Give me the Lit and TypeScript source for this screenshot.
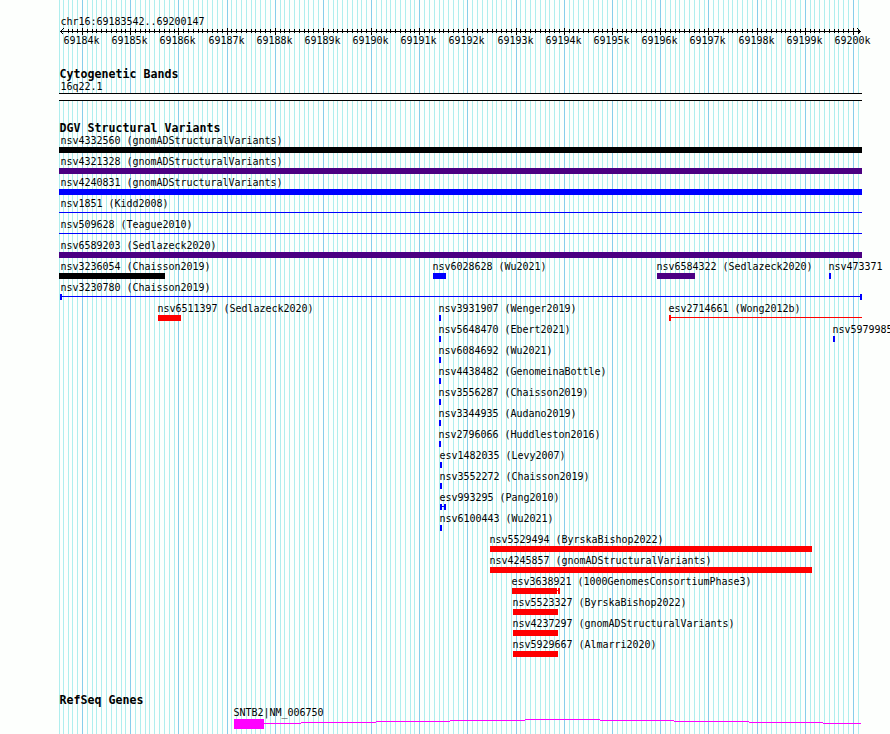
import { LitElement, css, html, svg } from 'lit';
import { customElement, property } from 'lit/decorators.js';
import { styleMap } from 'lit/directives/style-map.js';

type Glyph = 'box' | 'line' | 'capLeft' | 'capBoth' | 'boxCap';

interface Feature {
  label: string;
  // pixel columns on the panel, end is exclusive
  start: number;
  end: number;
  color: string;
  glyph: Glyph;
  labelAt?: number;
}

const PANEL_START = 59;
const PANEL_END = 862;
const WIDTH = 890;
const HEIGHT = 734;

const BLACK = '#000000';
const INDIGO = '#4b0082';
const BLUE = '#0000ff';
const RED = '#ff0000';
const MAGENTA = '#ff00ff';

const PX_PER_KB = 48.18;
const FIRST_KB = 69184;
const LAST_KB = 69200;

const kbToX = (kb: number) => Math.round(82.02 + (kb - FIRST_KB) * PX_PER_KB);

const f = (
  label: string,
  start: number,
  end: number,
  color: string,
  glyph: Glyph = 'box',
  labelAt?: number,
): Feature => ({ label, start, end, color, glyph, labelAt });

const full = (label: string, color: string, glyph: Glyph = 'box') =>
  f(label, PANEL_START, PANEL_END, color, glyph, 60.5);

const ROWS: Feature[][] = [
  [full('nsv4332560 (gnomADStructuralVariants)', BLACK)],
  [full('nsv4321328 (gnomADStructuralVariants)', INDIGO)],
  [full('nsv4240831 (gnomADStructuralVariants)', BLUE)],
  [full('nsv1851 (Kidd2008)', BLUE, 'line')],
  [full('nsv509628 (Teague2010)', BLUE, 'line')],
  [full('nsv6589203 (Sedlazeck2020)', INDIGO)],
  [
    f('nsv3236054 (Chaisson2019)', 59, 165, BLACK, 'box', 60.5),
    f('nsv6028628 (Wu2021)', 433, 446, BLUE),
    f('nsv6584322 (Sedlazeck2020)', 657, 695, INDIGO),
    f('nsv473371', 829, 831, BLUE),
  ],
  [f('nsv3230780 (Chaisson2019)', 60, 862, BLUE, 'capBoth', 60.5)],
  [
    f('nsv6511397 (Sedlazeck2020)', 158, 181, RED),
    f('nsv3931907 (Wenger2019)', 439, 441, BLUE),
    f('esv2714661 (Wong2012b)', 669, 862, RED, 'capLeft'),
  ],
  [
    f('nsv5648470 (Ebert2021)', 439, 441, BLUE),
    f('nsv5979985', 833, 835, BLUE),
  ],
  [f('nsv6084692 (Wu2021)', 439, 441, BLUE)],
  [f('nsv4438482 (GenomeinaBottle)', 439, 441, BLUE)],
  [f('nsv3556287 (Chaisson2019)', 439, 441, BLUE)],
  [f('nsv3344935 (Audano2019)', 439, 441, BLUE)],
  [f('nsv2796066 (Huddleston2016)', 439, 441, BLUE)],
  [f('esv1482035 (Levy2007)', 440, 442, BLUE)],
  [f('nsv3552272 (Chaisson2019)', 440, 442, BLUE)],
  [f('esv993295 (Pang2010)', 440, 446, BLUE, 'capBoth')],
  [f('nsv6100443 (Wu2021)', 440, 442, BLUE)],
  [f('nsv5529494 (ByrskaBishop2022)', 490, 812, RED)],
  [f('nsv4245857 (gnomADStructuralVariants)', 490, 812, RED)],
  [f('esv3638921 (1000GenomesConsortiumPhase3)', 512, 560, RED, 'boxCap')],
  [f('nsv5523327 (ByrskaBishop2022)', 513, 558, RED)],
  [f('nsv4237297 (gnomADStructuralVariants)', 513, 558, RED)],
  [f('nsv5929667 (Almarri2020)', 513, 558, RED)],
];

@customElement('gb-gridlines')
export class GbGridlines extends LitElement {
  static styles = css`
    :host,
    svg {
      display: block;
    }
    .minor {
      fill: #afeeee;
    }
    .major {
      fill: #87ceeb;
    }
  `;

  render() {
    const minor: number[] = [PANEL_START];
    const major: number[] = [];
    for (let i = -4; i <= (LAST_KB - FIRST_KB) * 10 + 1; i++) {
      const x = kbToX(FIRST_KB + i / 10);
      if (i % 10 === 0) major.push(x);
      else minor.push(x);
    }
    const line = (x: number, cls: string) =>
      svg`<rect class=${cls} x=${x} y="0" width="1" height=${HEIGHT}></rect>`;
    return html`<svg width=${WIDTH} height=${HEIGHT} shape-rendering="crispEdges">
      ${minor.map((x) => line(x, 'minor'))}
      ${major.map((x) => line(x, 'major'))}
    </svg>`;
  }
}

@customElement('gb-ruler')
export class GbRuler extends LitElement {
  static styles = css`
    :host,
    svg {
      display: block;
    }
    .arrow {
      fill: none;
      stroke: #000;
    }
    .labels {
      display: grid;
      height: 12px;
      line-height: 11px;
    }
    .label {
      grid-area: 1 / 1;
      white-space: pre;
    }
  `;

  render() {
    const ticks = [];
    for (let i = -3; i <= (LAST_KB - FIRST_KB) * 10 + 1; i++) {
      const x = kbToX(FIRST_KB + i / 10);
      const isMajor = i % 10 === 0;
      ticks.push(
        svg`<rect x=${x} y=${isMajor ? 0 : 1} width="1" height=${isMajor ? 7 : 4}></rect>`,
      );
    }
    const labels = [];
    for (let kb = FIRST_KB; kb <= LAST_KB; kb++) labels.push(kb);
    return html`
      <svg width=${WIDTH} height="7" shape-rendering="crispEdges">
        <rect x="60" y="3" width="801" height="1"></rect>
        ${ticks}
        <path class="arrow" d="M63.5 .5L60.5 3.5L63.5 6.5M857.5 .5L860.5 3.5L857.5 6.5"></path>
      </svg>
      <div class="labels">
        ${labels.map(
          (kb) => html`<span
            class="label"
            style=${styleMap({ marginLeft: `${kbToX(kb) - 18.5}px` })}
            >${kb}k</span
          >`,
        )}
      </div>
    `;
  }
}

@customElement('gb-feature')
export class GbFeature extends LitElement {
  static styles = css`
    :host {
      display: block;
    }
    .label {
      height: 13px;
      line-height: 13px;
      white-space: pre;
    }
    svg {
      display: block;
    }
  `;

  @property({ attribute: false })
  feature!: Feature;

  private _renderGlyph({ start, end, glyph }: Feature) {
    const w = end - start;
    switch (glyph) {
      case 'line':
        return svg`<rect y="2" width=${w} height="1"></rect>`;
      case 'capLeft':
        return svg`<rect width="2" height="6"></rect>
          <rect y="2" width=${w} height="1"></rect>`;
      case 'capBoth':
        return svg`<rect width="2" height="6"></rect>
          <rect y="2" width=${w} height="1"></rect>
          <rect x=${w - 2} width="2" height="6"></rect>`;
      case 'boxCap':
        return svg`<rect width=${w - 3} height="6"></rect>
          <rect y="2" width=${w} height="1"></rect>
          <rect x=${w - 2} width="2" height="6"></rect>`;
      default:
        return svg`<rect width=${w} height="6"></rect>`;
    }
  }

  render() {
    const { label, start, end, color, labelAt } = this.feature;
    const textX = labelAt ?? start - 0.5;
    return html`
      <div class="label" style=${styleMap({ marginLeft: `${textX}px` })}>${label}</div>
      <svg
        width=${end - start}
        height="6"
        fill=${color}
        shape-rendering="crispEdges"
        style=${styleMap({ marginLeft: `${start}px` })}
      >
        ${this._renderGlyph(this.feature)}
      </svg>
    `;
  }
}

@customElement('app-root')
export class AppRoot extends LitElement {
  static styles = css`
    :host {
      display: block;
      position: relative;
      width: 890px;
      height: 734px;
      overflow: hidden;
      background: #fdfffd;
      color: #000;
      font-family: 'DejaVu Sans Mono', 'Liberation Mono', monospace;
      font-size: 10px;
      letter-spacing: -0.02px;
    }
    .gridlines {
      position: absolute;
      inset: 0;
    }
    .panel {
      position: relative;
      display: flex;
      flex-direction: column;
      padding-top: 15px;
    }
    .region,
    .band-name,
    .gene-name {
      height: 13px;
      line-height: 13px;
      padding-left: 60.5px;
      white-space: pre;
    }
    .title {
      height: 13px;
      line-height: 14px;
      padding-left: 59.5px;
      font-size: 11.6px;
      font-weight: bold;
      letter-spacing: 0.016px;
    }
    .cytoband {
      margin-top: 20px;
    }
    .band {
      width: 803px;
      height: 8px;
      box-sizing: border-box;
      margin-left: 59px;
      border: solid #000;
      border-width: 1px 0;
      background: #fdfffd;
    }
    .variants {
      margin-top: 20px;
    }
    .row {
      display: grid;
      height: 21px;
    }
    .row gb-feature {
      grid-area: 1 / 1;
    }
    .genes {
      margin-top: 34px;
    }
    .gene-name {
      padding-left: 233.5px;
    }
    .gene {
      display: block;
    }
  `;

  private _renderGene() {
    // intron connector, one run per pixel row: [from, to, y]
    const runs = [
      [264, 301, 4],
      [301, 376, 3],
      [376, 450, 2],
      [450, 525, 1],
      [525, 600, 0],
      [600, 674, 1],
      [674, 749, 2],
      [749, 823, 3],
      [823, 861, 4],
    ];
    return html`<svg
      class="gene"
      width=${WIDTH}
      height="10"
      fill=${MAGENTA}
      shape-rendering="crispEdges"
    >
      <rect x="234" y="0" width="30" height="10"></rect>
      ${runs.map(
        ([from, to, y]) =>
          svg`<rect x=${from} y=${y} width=${to - from} height="1"></rect>`,
      )}
    </svg>`;
  }

  render() {
    return html`
      <gb-gridlines class="gridlines"></gb-gridlines>
      <div class="panel">
        <div class="region">chr16:69183542..69200147</div>
        <gb-ruler></gb-ruler>
        <section class="cytoband">
          <div class="title">Cytogenetic Bands</div>
          <div class="band-name">16q22.1</div>
          <div class="band"></div>
        </section>
        <section class="variants">
          <div class="title">DGV Structural Variants</div>
          ${ROWS.map(
            (row) => html`<div class="row">
              ${row.map((item) => html`<gb-feature .feature=${item}></gb-feature>`)}
            </div>`,
          )}
        </section>
        <section class="genes">
          <div class="title">RefSeq Genes</div>
          <div class="gene-name">SNTB2|NM_006750</div>
          ${this._renderGene()}
        </section>
      </div>
    `;
  }
}

declare global {
  interface HTMLElementTagNameMap {
    'app-root': AppRoot;
    'gb-gridlines': GbGridlines;
    'gb-ruler': GbRuler;
    'gb-feature': GbFeature;
  }
}
